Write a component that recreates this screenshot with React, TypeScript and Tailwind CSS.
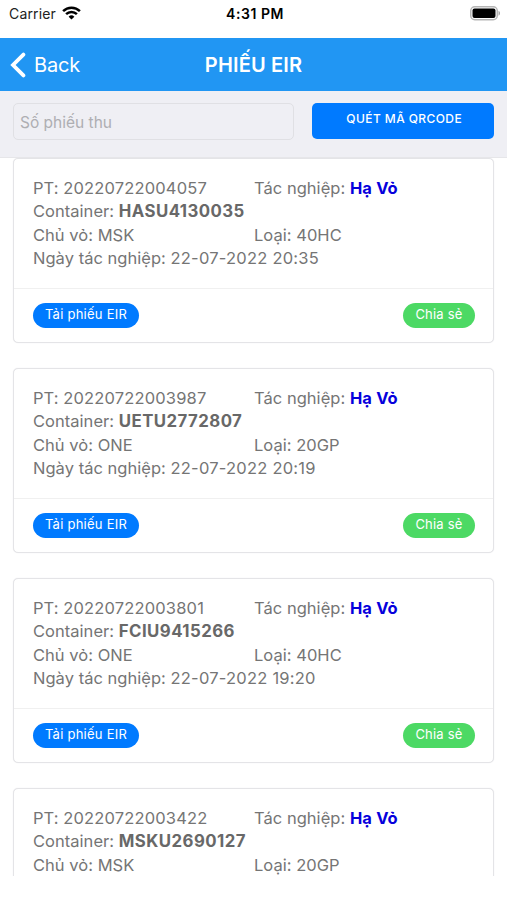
type Ticket = {
  pt: string;
  container: string;
  owner: string;
  type: string;
  date?: string;
};

const tickets: Ticket[] = [
  { pt: '20220722004057', container: 'HASU4130035', owner: 'MSK', type: '40HC', date: '22-07-2022 20:35' },
  { pt: '20220722003987', container: 'UETU2772807', owner: 'ONE', type: '20GP', date: '22-07-2022 20:19' },
  { pt: '20220722003801', container: 'FCIU9415266', owner: 'ONE', type: '40HC', date: '22-07-2022 19:20' },
  { pt: '20220722003422', container: 'MSKU2690127', owner: 'MSK', type: '20GP' },
];

function StatusBar() {
  return (
    <div className="grid h-[38px] shrink-0 grid-cols-3 items-start bg-white pl-[9px] pr-[6px] text-[14px] leading-[28px] text-black">
      <div className="flex items-center gap-[6px]">
        <span className="tracking-[0.15px] text-[#222]">Carrier</span>
        <svg className="-mt-[3px]" width="19" height="14" viewBox="0 0 19 14" fill="none" stroke="#000" strokeWidth="2.5">
          <path d="M1.1 5.1a12 12 0 0 1 16.8 0" />
          <path d="M4.1 8.2a7.7 7.7 0 0 1 10.8 0" />
          <path d="M9.5 13.6 6.6 10.7a4.1 4.1 0 0 1 5.8 0Z" fill="#000" stroke="none" />
        </svg>
      </div>
      <span className="text-center font-semibold tracking-[0.55px]">4:31 PM</span>
      <div className="flex justify-end pt-[6px]">
        <svg width="31" height="15" viewBox="0 0 31 15">
          <rect x="0.75" y="0.75" width="26.5" height="13" rx="4" fill="#fff" stroke="#b5b5b5" strokeWidth="1.5" />
          <rect x="2.5" y="2.5" width="23" height="9.5" rx="2" fill="#000" />
          <path d="M28.5 4.8c2 .7 2 4.2 0 4.9Z" fill="#a5a5a5" />
        </svg>
      </div>
    </div>
  );
}

function Header() {
  return (
    <header className="grid h-[53px] shrink-0 grid-cols-3 items-center bg-[#2196f3] px-[10px] text-white">
      <div className="flex items-center gap-[8px]">
        <svg width="16" height="26" viewBox="0 0 16 26" fill="none" stroke="#fff" strokeWidth="3.8" strokeLinecap="round">
          <path d="M13.4 2.6 3 13l10.4 10.4" strokeLinejoin="miter" />
        </svg>
        <span className="text-[20px] tracking-[-0.2px]">Back</span>
      </div>
      <h1 className="text-center text-[20px] font-semibold tracking-[0.15px] whitespace-nowrap">PHIẾU EIR</h1>
    </header>
  );
}

function TicketCard({ ticket }: { ticket: Ticket }) {
  return (
    <article className="h-[185px] shrink-0 rounded-[5px] border border-[#e4e4e7] bg-white shadow-[0_0_1px_#e0e0e4]">
      <div className="px-[19px] pt-[18px] text-[16.5px] leading-[23.3px] tracking-[0.03px] text-[#757575]">
        <div className="flex">
          <span className="w-[221px]">
            PT: <span className="tracking-[0.17px]">{ticket.pt}</span>
          </span>
          <span>
            Tác nghiệp: <b className="font-bold tracking-[0.15px] text-[#0600dc]">Hạ Vỏ</b>
          </span>
        </div>
        <div>
          Container: <b className="text-[16.8px] font-bold tracking-[0.45px] text-[#686868]">{ticket.container}</b>
        </div>
        <div className="flex">
          <span className="w-[221px]">Chủ vỏ: {ticket.owner}</span>
          <span>Loại: {ticket.type}</span>
        </div>
        {ticket.date && (
          <div>
            Ngày tác nghiệp: <span className="tracking-[0.22px]">{ticket.date}</span>
          </div>
        )}
      </div>
      {ticket.date && (
        <div className="mt-[18px] flex h-[53px] items-center justify-between border-t border-[#f0f0f0] pl-[19px] pr-[18px] text-[13px] text-white">
          <button className="h-[25px] w-[106px] rounded-full bg-[#007aff] tracking-[0.25px]">Tải phiếu EIR</button>
          <button className="h-[25px] w-[72px] rounded-full bg-[#4cd964] tracking-[0.2px]">Chia sẻ</button>
        </div>
      )}
    </article>
  );
}

export default function App() {
  return (
    <div className="flex h-[900px] w-[507px] flex-col overflow-hidden bg-white font-['Inter','Liberation_Sans',sans-serif]">
      <StatusBar />
      <Header />
      <div className="flex h-[67px] shrink-0 items-start gap-[18px] border-b border-[#e6e6e9] bg-[#efeff4] px-[13px] pt-[12px]">
        <input
          className="h-[37px] w-[282px] rounded-[5px] border-[1.5px] border-[#e0e0e4] bg-transparent px-[6px] pt-[2px] text-[15.5px] placeholder:text-[#aeaeb2]"
          placeholder="Số phiếu thu"
        />
        <button className="h-[36px] w-[182px] rounded-[5px] bg-[#007aff] pb-[4px] pl-[2px] text-[12px] font-medium tracking-[0.42px] text-white">
          QUÉT MÃ QRCODE
        </button>
      </div>
      <main className="-mx-px flex h-[718px] shrink-0 flex-col gap-[25px] overflow-hidden px-[14px]">
        {tickets.map((ticket) => (
          <TicketCard key={ticket.pt} ticket={ticket} />
        ))}
      </main>
    </div>
  );
}
